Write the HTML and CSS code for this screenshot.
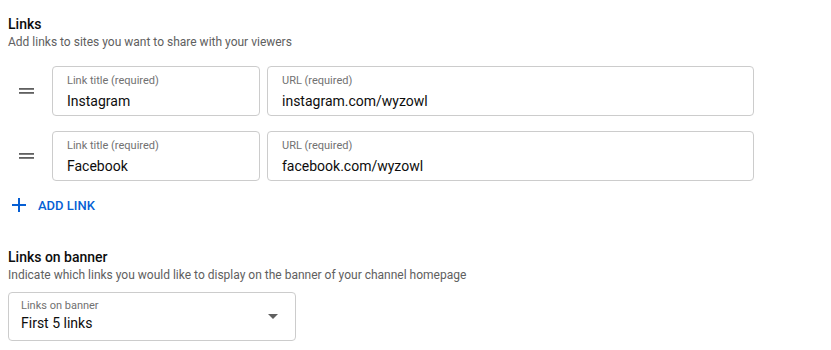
FILE: index.html
```html
<!DOCTYPE html>
<html lang="en">
<head>
    <meta charset="UTF-8">
    <meta name="viewport" content="width=device-width, initial-scale=1.0">
    <title>Links</title>
    <link rel="stylesheet" href="styles.css">
</head>
<body>
    <section class="section links-section">
        <h2 class="section-title">Links</h2>
        <div class="section-desc">Add links to sites you want to share with your viewers</div>

        <div class="link-list">
            <div class="link-row">
                <div class="drag-handle">
                    <svg width="15" height="6" viewBox="0 0 15 6"><rect x="0" y="0" width="15" height="1.8"/><rect x="0" y="4" width="15" height="1.8"/></svg>
                </div>
                <div class="field field-title">
                    <div class="field-label">Link title (required)</div>
                    <div class="field-value">Instagram</div>
                </div>
                <div class="field field-url">
                    <div class="field-label">URL (required)</div>
                    <div class="field-value">instagram.com/wyzowl</div>
                </div>
            </div>
            <div class="link-row">
                <div class="drag-handle">
                    <svg width="15" height="6" viewBox="0 0 15 6"><rect x="0" y="0" width="15" height="1.8"/><rect x="0" y="4" width="15" height="1.8"/></svg>
                </div>
                <div class="field field-title">
                    <div class="field-label">Link title (required)</div>
                    <div class="field-value">Facebook</div>
                </div>
                <div class="field field-url">
                    <div class="field-label">URL (required)</div>
                    <div class="field-value">facebook.com/wyzowl</div>
                </div>
            </div>
        </div>

        <div class="add-link">
            <svg class="add-icon" width="14" height="14" viewBox="0 0 14 14"><rect x="0" y="6" width="14" height="2"/><rect x="6" y="0" width="2" height="14"/></svg>
            <span>ADD LINK</span>
        </div>
    </section>

    <section class="section banner-section">
        <h2 class="section-title">Links on banner</h2>
        <div class="section-desc">Indicate which links you would like to display on the banner of your channel homepage</div>

        <div class="select">
            <div class="select-text">
                <div class="select-label">Links on banner</div>
                <div class="select-value">First 5 links</div>
            </div>
            <svg class="select-arrow" width="10" height="5" viewBox="0 0 10 5"><path d="M0 0l5 5 5-5z"/></svg>
        </div>
    </section>
</body>
</html>
```

FILE: styles.css
```css
body {
    margin: 0;
    padding: 0 8px;
    font-family: Roboto, "Liberation Sans", sans-serif;
    background-color: #ffffff;
    color: #0d0d0d;
}

.section-title {
    margin: 0;
    font-size: 14px;
    line-height: 20px;
    font-weight: 500;
    color: #0d0d0d;
}

.links-section {
    padding-top: 14px;
}

.section-desc {
    font-size: 12px;
    line-height: 16px;
    color: #606060;
}

.link-list {
    margin-top: 16px;
    display: flex;
    flex-direction: column;
    gap: 15px;
}

.link-row {
    display: flex;
    align-items: center;
}

.drag-handle {
    width: 44px;
    padding-left: 11px;
    box-sizing: border-box;
    display: flex;
    align-items: center;
}

.drag-handle svg {
    fill: #606060;
}

.field {
    height: 50px;
    box-sizing: border-box;
    border: 1px solid #cccccc;
    border-radius: 4px;
    padding: 7px 14px 0;
}

.field-title {
    width: 208px;
}

.field-url {
    width: 487px;
    margin-left: 7px;
}

.field-label {
    font-size: 11px;
    line-height: 14px;
    color: #717171;
}

.field-value {
    margin-top: 3px;
    font-size: 14px;
    line-height: 20px;
    color: #0d0d0d;
}

.add-link {
    height: 48px;
    display: flex;
    align-items: center;
    color: #065fd4;
    font-size: 13px;
    font-weight: 500;
}

.add-icon {
    fill: #065fd4;
    margin-left: 4px;
    margin-right: 12px;
}

.banner-section {
    margin-top: 18px;
}

.select {
    margin-top: 9px;
    width: 288px;
    height: 49px;
    box-sizing: border-box;
    border: 1px solid #cccccc;
    border-radius: 4px;
    padding: 6px 17px 0 12px;
    display: flex;
    justify-content: space-between;
}

.select-label {
    font-size: 11px;
    line-height: 14px;
    color: #717171;
}

.select-value {
    font-size: 14px;
    line-height: 20px;
    color: #0d0d0d;
}

.select-arrow {
    fill: #606060;
    margin-top: 15px;
}
```
